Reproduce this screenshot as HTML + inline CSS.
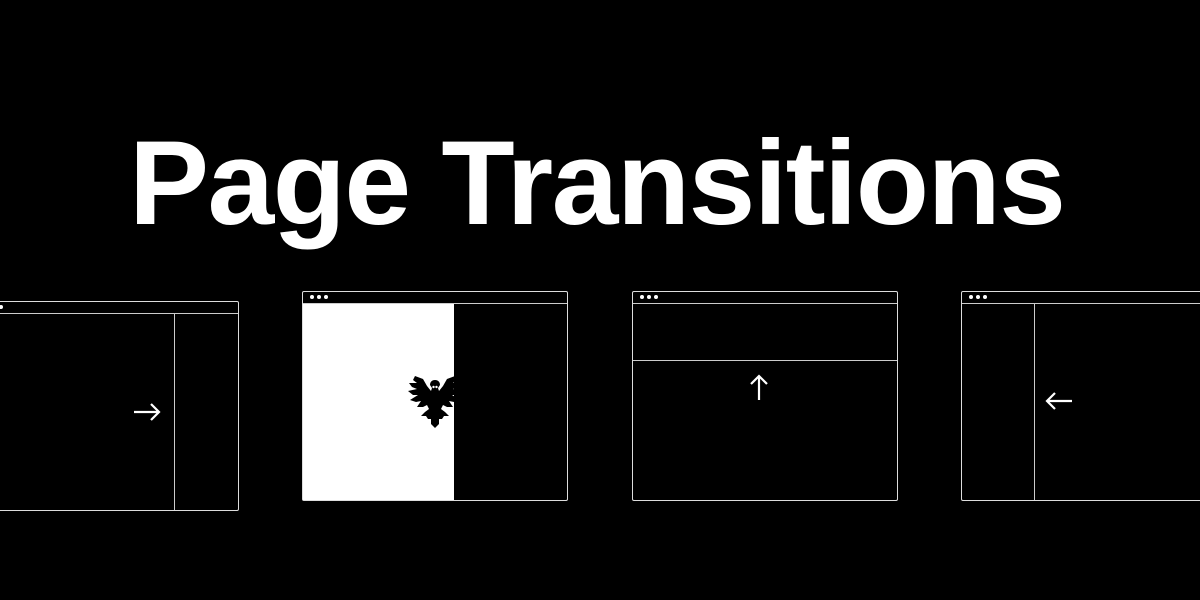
<!DOCTYPE html>
<html><head><meta charset="utf-8"><style>
html,body{margin:0;padding:0;background:#000;width:1200px;height:600px;overflow:hidden;position:relative;font-family:"Liberation Sans",sans-serif}
.t{position:absolute;left:129px;top:113px;font-size:120px;font-weight:bold;color:#fff;letter-spacing:-1.55px;line-height:140px;white-space:nowrap}
.w{position:absolute;border:1.3px solid #ddd;border-radius:2px;box-sizing:border-box}
.h{position:absolute;left:0;right:0;top:11px;border-top:1.3px solid #ccc}
.d{position:absolute;top:3px;width:4px;height:4px;border-radius:50%;background:#fff}
</style></head><body>
<div class="t">Page Transitions</div>

<div class="w" style="left:-10px;top:301px;width:249px;height:210px">
 <div class="h"></div><div class="d" style="left:8px"></div>
 <div style="position:absolute;left:183px;top:12px;bottom:0;border-left:1.3px solid #ccc"></div>
</div>
<svg style="position:absolute;left:132px;top:400px" width="30" height="24"><path d="M2 12H27M19 4L27 12L19 20" stroke="#fff" stroke-width="2.2" fill="none"/></svg>

<div class="w" style="left:302px;top:291px;width:266px;height:210px">
 <div class="h"></div><div class="d" style="left:7px"></div><div class="d" style="left:14px"></div><div class="d" style="left:21px"></div>
 <div style="position:absolute;left:0;top:12px;width:151px;bottom:0;background:#fff"></div>
</div>
<svg style="position:absolute;left:405px;top:374px" width="60" height="56" viewBox="0 0 60 56">
 <g id="e"><path d="M30 6C33 6 35 8 35 11L33 14L34 17L38 12L42 5L50 2L52 6L48 9L56 9L53 13L48 15L57 17L52 21L47 21L55 26L49 28L44 27L48 33L42 33L38 31L36 35L40 38L44 42L39 42L37 45L34 45L34 50L30 54Z" fill="#000"/></g>
 <use href="#e" transform="translate(60,0) scale(-1,1)"/>
 <circle cx="28.5" cy="13" r="1.2" fill="#fff"/><circle cx="31.5" cy="13" r="1.2" fill="#fff"/>
</svg>

<div class="w" style="left:632px;top:291px;width:266px;height:210px">
 <div class="h"></div><div class="d" style="left:7px"></div><div class="d" style="left:14px"></div><div class="d" style="left:21px"></div>
 <div style="position:absolute;left:0;right:0;top:68px;border-top:1.3px solid #ccc"></div>
</div>
<svg style="position:absolute;left:747px;top:374px" width="24" height="28"><path d="M12 26V2M4 10L12 2L20 10" stroke="#fff" stroke-width="2.2" fill="none"/></svg>

<div class="w" style="left:961px;top:291px;width:266px;height:210px">
 <div class="h"></div><div class="d" style="left:7px"></div><div class="d" style="left:14px"></div><div class="d" style="left:21px"></div>
 <div style="position:absolute;left:72px;top:12px;bottom:0;border-left:1.3px solid #ccc"></div>
</div>
<svg style="position:absolute;left:1044px;top:389px" width="30" height="24"><path d="M28 12H3M11 4L3 12L11 20" stroke="#fff" stroke-width="2.2" fill="none"/></svg>
</body></html>
